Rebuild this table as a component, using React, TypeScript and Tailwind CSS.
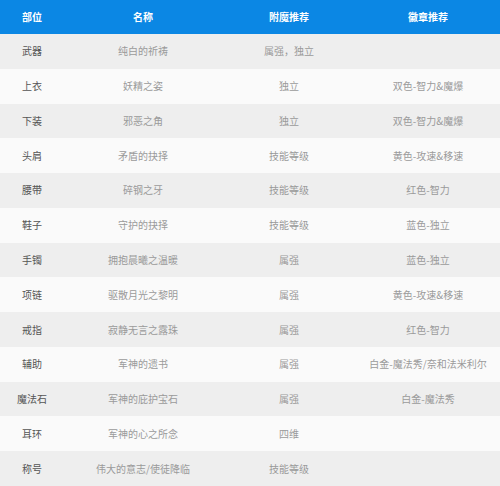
import React from "react";

const rows: [string, string, string, string][] = [
  ["武器", "纯白的祈祷", "属强，独立", ""],
  ["上衣", "妖精之姿", "独立", "双色-智力&魔爆"],
  ["下装", "邪恶之角", "独立", "双色-智力&魔爆"],
  ["头肩", "矛盾的抉择", "技能等级", "黄色-攻速&移速"],
  ["腰带", "碎钢之牙", "技能等级", "红色-智力"],
  ["鞋子", "守护的抉择", "技能等级", "蓝色-独立"],
  ["手镯", "拥抱晨曦之温暖", "属强", "蓝色-独立"],
  ["项链", "驱散月光之黎明", "属强", "黄色-攻速&移速"],
  ["戒指", "寂静无言之露珠", "属强", "红色-智力"],
  ["辅助", "军神的遗书", "属强", "白金-魔法秀/奈和法米利尔"],
  ["魔法石", "军神的庇护宝石", "属强", "白金-魔法秀"],
  ["耳环", "军神的心之所念", "四维", ""],
  ["称号", "伟大的意志/使徒降临", "技能等级", ""],
];

export default function App() {
  return (
    <div
      className="w-[500px] h-[486px] flex flex-col bg-white text-[10px] leading-none"
      style={{ fontFamily: '"Noto Sans CJK SC", "Noto Sans", sans-serif' }}
    >
      <div className="h-[34px] shrink-0 grid grid-cols-[64px_158px_134px_144px] bg-[#0b87e4] text-white font-bold">
        <div className="flex items-center justify-center">部位</div>
        <div className="flex items-center justify-center">名称</div>
        <div className="flex items-center justify-center">附魔推荐</div>
        <div className="flex items-center justify-center">徽章推荐</div>
      </div>
      {rows.map((r, i) => (
        <div
          key={i}
          className={
            "flex-1 grid grid-cols-[64px_158px_134px_144px] " +
            (i % 2 === 0 ? "bg-[#eeeeee]" : "bg-[#fafafa]")
          }
        >
          <div className="flex items-center justify-center text-[#555555]">{r[0]}</div>
          <div className="flex items-center justify-center text-[#9a9a9a]">{r[1]}</div>
          <div className="flex items-center justify-center text-[#9a9a9a]">{r[2]}</div>
          <div className="flex items-center justify-center text-[#9a9a9a]">{r[3]}</div>
        </div>
      ))}
    </div>
  );
}
